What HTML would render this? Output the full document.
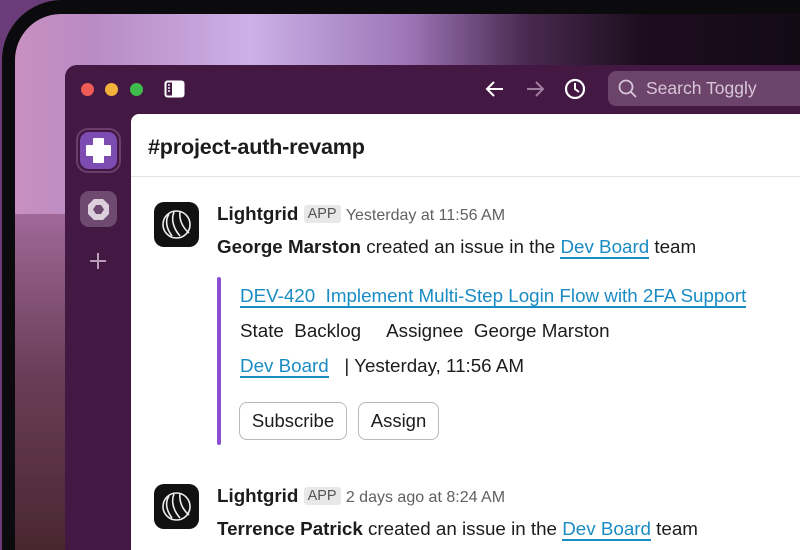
<!DOCTYPE html>
<html><head><meta charset="utf-8"><style>
*{margin:0;padding:0;box-sizing:border-box}
html,body{width:800px;height:550px;overflow:hidden}
body{position:relative;background:#6a3d7a;font-family:"Liberation Sans",sans-serif}
.bezel{position:absolute;left:2px;top:0;width:798px;height:550px;border-radius:60px 0 0 0;background:#0b0a0c}
.screen{position:absolute;left:15px;top:14px;width:785px;height:536px;border-radius:46px 0 0 0;overflow:hidden;
background:linear-gradient(90deg,#c890c0 0%,#b98bc4 10%,#ccb0e6 30%,#9d76b8 50%,#4a2a50 65%,#1c0d1e 80%,#140a16 100%)}
.screen:after{content:"";position:absolute;left:0;top:200px;width:60px;height:400px;background:linear-gradient(180deg,#a06898,#6a3e58 40%,#3e1e22)}
.win{position:absolute;left:65px;top:65px;width:735px;height:485px;border-radius:12px 0 0 0;background:#431843;overflow:hidden}
.content{position:absolute;left:131px;top:114px;width:669px;height:436px;background:#fff;border-radius:8px 0 0 0}
.t{position:absolute;white-space:nowrap;color:#1d1c1d;font-size:18.8px}
.a{color:#1a8cc4;border-bottom:2px solid #1a8cc4;line-height:21px}
.app{background:#e8e8e8;color:#555;font-size:14.5px;padding:1px 4px;border-radius:3px;vertical-align:2px}
.ts{color:#616061;font-size:16px}
.btn{position:absolute;top:402px;height:38px;border:1.5px solid #b8b8b8;border-radius:8px;font-size:18.5px;line-height:35px;text-align:center;color:#1d1c1d}
.av{position:absolute;width:45px;height:45px;border-radius:10px;background:#111}
</style></head><body>
<div class="bezel"></div>
<div class="screen"></div>
<div class="win">
 <div style="position:absolute;left:16px;top:18px;width:13px;height:13px;border-radius:50%;background:#ee5c55"></div>
 <div style="position:absolute;left:40px;top:18px;width:13px;height:13px;border-radius:50%;background:#f3b13b"></div>
 <div style="position:absolute;left:65px;top:18px;width:13px;height:13px;border-radius:50%;background:#3fbd4c"></div>
 <svg style="position:absolute;left:99px;top:15px" width="22" height="19" viewBox="0 0 22 19"><rect x="1.5" y="1.5" width="18" height="15" rx="2" fill="none" stroke="#fff" stroke-width="2"/><rect x="8" y="2" width="11" height="14" fill="#fff"/><path d="M4 5h2M4 8h2M4 11h2" stroke="#fff" stroke-width="1.5"/></svg>
 <svg style="position:absolute;left:419px;top:14px" width="22" height="20"><path d="M19 10H3M10 3L3 10l7 7" stroke="#fff" stroke-width="2" fill="none"/></svg>
 <svg style="position:absolute;left:460px;top:14px" width="22" height="20"><path d="M2 10h16M11 3l7 7-7 7" stroke="#a07ea0" stroke-width="2" fill="none"/></svg>
 <svg style="position:absolute;left:499px;top:13px" width="22" height="22"><circle cx="11" cy="11" r="9" stroke="#fff" stroke-width="2.2" fill="none"/><path d="M11 5v6l4 3" stroke="#fff" stroke-width="2" fill="none"/></svg>
 <div style="position:absolute;left:543px;top:6px;width:250px;height:35px;border-radius:8px;background:#6b436b"></div>
 <svg style="position:absolute;left:553px;top:14px" width="20" height="20"><circle cx="8" cy="8" r="6.5" stroke="#d8c6d8" stroke-width="1.8" fill="none"/><path d="M13 13l5 5" stroke="#d8c6d8" stroke-width="1.8"/></svg>
 <div class="t" style="left:581px;top:13px;color:#d8c6d8;font-size:17.5px">Search Toggly</div>
 <div style="position:absolute;left:11px;top:63px;width:45px;height:45px;border-radius:12px;border:2px solid #6b3e6e"></div>
 <div style="position:absolute;left:15px;top:67px;width:37px;height:37px;border-radius:9px;background:#7c4cb2"></div>
 <svg style="position:absolute;left:19px;top:71px" width="29" height="29" viewBox="0 0 29 29"><path d="M10 3h9v7h7v9h-7v7h-9v-7H3v-9h7z" fill="#fff" stroke="#fff" stroke-width="2" stroke-linejoin="round"/></svg>
 <div style="position:absolute;left:15px;top:126px;width:37px;height:36px;border-radius:9px;background:#6e4a70"></div>
 <svg style="position:absolute;left:20px;top:131px" width="27" height="27" viewBox="0 0 27 27"><path d="M9 3h9l6 6v9l-6 6H9l-6-6V9z" fill="#ddd0dd"/><path d="M11 9h5l3 4.5-3 4.5h-5l-3-4.5z" fill="#6e4a70"/></svg>
 <svg style="position:absolute;left:23px;top:186px" width="20" height="20"><path d="M10 2v16M2 10h16" stroke="#b89cb8" stroke-width="2"/></svg>
</div>
<div class="content"></div>
<div class="t" style="left:148px;top:134px;font-size:21.6px;font-weight:bold;letter-spacing:-0.2px">#project-auth-revamp</div>
<div style="position:absolute;left:131px;top:176px;width:669px;height:1px;background:#e2e2e2"></div>

<div class="av" style="left:154px;top:202px"></div>
<svg style="position:absolute;left:160px;top:208px" width="33" height="33" viewBox="0 0 33 33" fill="none" stroke="#eee" stroke-width="1.6"><circle cx="16.5" cy="16.5" r="13.5"/><path d="M9 6c-4 6-3 14 3 22M14 4c-3 7-1 16 6 24M20 4c-1 7 2 15 9 21"/></svg>
<div class="t" style="left:217px;top:203px"><b>Lightgrid</b> <span class="app">APP</span> <span class="ts">Yesterday at 11:56 AM</span></div>
<div class="t" style="left:217px;top:236px"><b>George Marston</b> created an issue in the <span class="a">Dev Board</span> team</div>
<div style="position:absolute;left:217px;top:277px;width:4px;height:168px;border-radius:2px;background:#8a4fd0"></div>
<div class="t" style="left:240px;top:285px"><span class="a">DEV-420&nbsp; Implement Multi-Step Login Flow with 2FA Support</span></div>
<div class="t" style="left:240px;top:320px">State&nbsp; Backlog &nbsp;&nbsp;&nbsp; Assignee&nbsp; George Marston</div>
<div class="t" style="left:240px;top:355px"><span class="a">Dev Board</span>&nbsp;&nbsp; | Yesterday, 11:56 AM</div>
<div class="btn" style="left:239px;width:108px">Subscribe</div>
<div class="btn" style="left:358px;width:81px">Assign</div>

<div class="av" style="left:154px;top:484px"></div>
<svg style="position:absolute;left:160px;top:490px" width="33" height="33" viewBox="0 0 33 33" fill="none" stroke="#eee" stroke-width="1.6"><circle cx="16.5" cy="16.5" r="13.5"/><path d="M9 6c-4 6-3 14 3 22M14 4c-3 7-1 16 6 24M20 4c-1 7 2 15 9 21"/></svg>
<div class="t" style="left:217px;top:485px"><b>Lightgrid</b> <span class="app">APP</span> <span class="ts">2 days ago at 8:24 AM</span></div>
<div class="t" style="left:217px;top:518px"><b>Terrence Patrick</b> created an issue in the <span class="a">Dev Board</span> team</div>
</body></html>
